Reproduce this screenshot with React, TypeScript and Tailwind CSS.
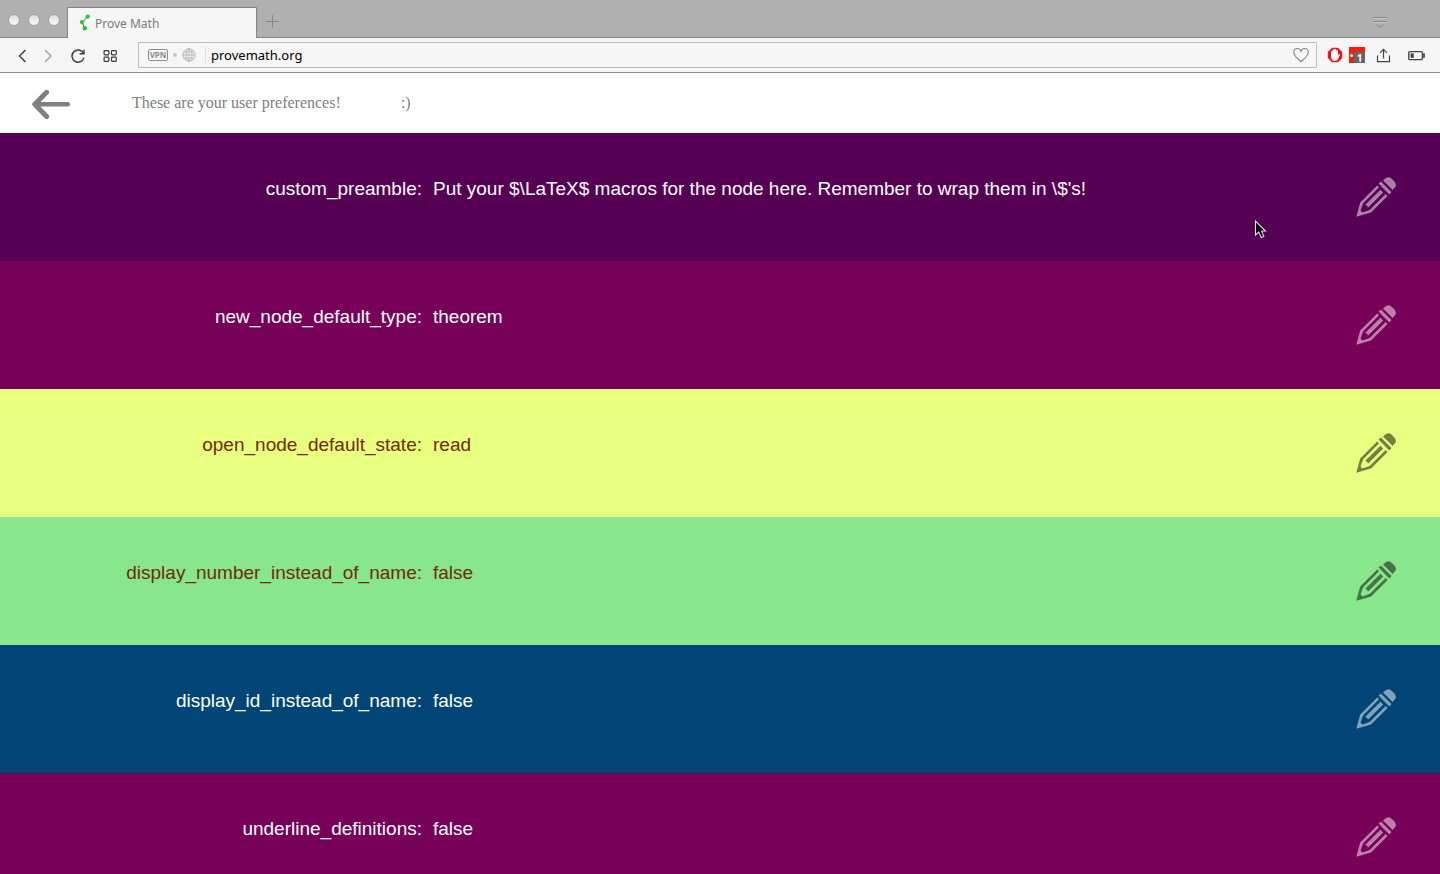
import React from "react";

type Preference = {
  name: string;
  value: string;
  row: string;
  icon: string;
};

const preferences: Preference[] = [
  {
    name: "custom_preamble",
    value: "Put your $\\LaTeX$ macros for the node here. Remember to wrap them in \\$'s!",
    row: "bg-[#550052] text-white",
    icon: "text-white/50",
  },
  { name: "new_node_default_type", value: "theorem", row: "bg-[#770058] text-white", icon: "text-white/50" },
  { name: "open_node_default_state", value: "read", row: "bg-[#e8ff80] text-[#702c08]", icon: "text-black/50" },
  { name: "display_number_instead_of_name", value: "false", row: "bg-[#88e68b] text-[#702c08]", icon: "text-black/50" },
  { name: "display_id_instead_of_name", value: "false", row: "bg-[#004575] text-white", icon: "text-white/50" },
  { name: "underline_definitions", value: "false", row: "bg-[#770058] text-white", icon: "text-white/50" },
];

function Pencil() {
  return (
    <svg viewBox="0 0 40 40" className="size-10" fill="currentColor" aria-hidden="true">
      <path d="M27 3.4 L30 0.9 Q32.6 -0.8 35.4 1.4 L38.4 4.4 Q41 7.6 39.2 10 L36.6 12.9 Z" />
      <path d="M22.5 6.5 L24.9 4.5 L35.5 15.1 L33.3 17.5 Z" />
      <path d="M21.2 8.4 L23.1 10.3 L7.2 26.2 L4.5 33.6 L6.4 35.5 L13.6 33 L29.7 17 L31.6 18.9 L15 35.6 L0.3 39.8 L4.2 25.4 Z" />
      <path d="M9 28 L24.4 12.7 L27.2 15.5 L11.9 30.8 L11.3 28.7 Z" />
    </svg>
  );
}

function BackArrow() {
  return (
    <svg viewBox="0 0 40 32" className="h-8 w-10" fill="none" stroke="#808080" strokeWidth="5" strokeLinecap="round" strokeLinejoin="round" aria-hidden="true">
      <path d="M36.8 16.3 H4" strokeWidth="4.4" />
      <path d="M15.6 4.3 L3.8 16.3 L15.6 28.5" />
    </svg>
  );
}

function TabStrip() {
  return (
    <div className="flex h-[38px] items-stretch border-b border-[#858585] bg-[#b0b0b0]">
      <div className="flex w-[67px] items-center gap-2 pl-2">
        {["Close window", "Minimize window", "Zoom window"].map((label) => (
          <button
            key={label}
            aria-label={label}
            className="mt-[2px] size-3 rounded-full border border-[#a2a2a2] bg-linear-to-b from-[#dcdcdc] to-[#fafafa]"
          />
        ))}
      </div>
      <div className="-mb-px mt-[7px] flex w-[190px] items-center gap-[3px] border border-b-0 border-[#858585] bg-[#f6f6f6] pl-[10px]">
        <svg viewBox="0 0 14 18" className="h-[18px] w-[14px]" aria-hidden="true">
          <path d="M9.5 3 L4 8.5 L7 14.5" fill="none" stroke="#555" strokeWidth="1" />
          <circle cx="9.7" cy="2.6" r="2.2" fill="#2fc52f" />
          <circle cx="4" cy="8.2" r="2.1" fill="#2fc52f" />
          <circle cx="6.8" cy="14.2" r="2.3" fill="#2fc52f" />
        </svg>
        <span className="pt-[2px] text-[12px] text-[#7b7b7b]">Prove Math</span>
      </div>
      <button aria-label="New tab" className="ml-2 mt-1 flex items-center">
        <svg viewBox="0 0 14 14" className="size-[14px]" stroke="#858585" aria-hidden="true">
          <path d="M7.5 1 V14 M1 7.5 H14" />
        </svg>
      </button>
      <button aria-label="Tab menu" className="ml-auto mr-[53px] mt-2 flex items-center">
        <svg viewBox="0 0 14 12" className="h-3 w-[14px]" fill="none" stroke="#858585" aria-hidden="true">
          <path d="M0.5 0.5 H13.5 M0.5 4.5 H13.5 M3.5 7.5 L7 10.8 L10.5 7.5" />
          <path d="M0.5 1.5 H13.5 M0.5 5.5 H13.5" stroke="#c8c8c8" />
        </svg>
      </button>
    </div>
  );
}

function AddressBar() {
  return (
    <div className="flex h-[35px] items-center border-b border-[#8c8c8c] bg-[#f6f6f6]">
      <nav aria-label="Browser" className="flex w-[138px] shrink-0 items-center gap-3 pl-[15px] pt-px">
        <button aria-label="Back">
          <svg viewBox="0 0 14 16" className="h-4 w-[14px]" fill="none" stroke="#333" strokeWidth="1.3">
            <path d="M10.5 2 L4.5 8 L10.5 14" />
          </svg>
        </button>
        <button aria-label="Forward">
          <svg viewBox="0 0 14 16" className="h-4 w-[14px]" fill="none" stroke="#999" strokeWidth="1.3">
            <path d="M4 2 L10 8 L4 14" />
          </svg>
        </button>
        <button aria-label="Reload" className="ml-[3px]">
          <svg viewBox="0 0 16 16" className="size-4" fill="none" stroke="#3a3a3a" strokeWidth="1.4">
            <path d="M13.5 5.2 A6.1 6.1 0 1 0 14 9.6" />
            <path d="M14 1.8 V5.7 H9.6" />
          </svg>
        </button>
        <button aria-label="Speed dial" className="ml-1">
          <svg viewBox="0 0 16 16" className="size-4" fill="none" stroke="#3a3a3a" strokeWidth="1.2">
            <rect x="2.1" y="2.6" width="4.8" height="4.2" rx="0.8" />
            <rect x="9.5" y="2.6" width="4.8" height="4.2" rx="0.8" />
            <rect x="2.1" y="9.2" width="4.8" height="4.2" rx="0.8" />
            <rect x="9.5" y="9.2" width="4.8" height="4.2" rx="0.8" />
          </svg>
        </button>
      </nav>
      <div className="flex h-[26px] min-w-0 flex-1 items-center rounded-[1px] border border-[#bdbdbd] bg-[#f6f6f6] pl-[9px] pr-[7px]">
        <span className="flex h-3 w-5 items-center justify-center rounded-[2px] border border-[#8c8c8c] text-[8px] font-bold leading-none text-[#8c8c8c]">
          VPN
        </span>
        <span className="ml-[5px] size-1 rounded-full bg-[#c6c6c6]" />
        <svg viewBox="0 0 14 14" className="ml-[5px] size-[14px]" fill="none" stroke="#b4b4b4" aria-hidden="true">
          <circle cx="7" cy="7" r="6.2" />
          <ellipse cx="7" cy="7" rx="3" ry="6.2" />
          <path d="M7 1 V13 M1 7 H13 M1.8 4 H12.2 M1.8 10 H12.2" strokeWidth="0.9" />
        </svg>
        <span className="ml-[9px] h-4 w-px bg-[#dcdcdc]" />
        <input
          aria-label="Address"
          defaultValue="provemath.org"
          className="ml-[5px] min-w-0 flex-1 bg-transparent pt-[2px] text-[13px] text-black outline-none"
        />
        <button aria-label="Bookmark">
          <svg viewBox="0 0 16 16" className="size-4" fill="none" stroke="#858585" strokeWidth="1.1">
            <path d="M8 14.6 C5.5 12.3 0.8 9.2 0.8 5.2 C0.8 0.7 6.6 0.3 8 4.1 C9.4 0.3 15.2 0.7 15.2 5.2 C15.2 9.2 10.5 12.3 8 14.6 Z" />
          </svg>
        </button>
      </div>
      <div className="flex shrink-0 items-center pl-[10px] pr-[14px]">
        <button aria-label="Ad blocker">
          <svg viewBox="0 0 16 16" className="size-4">
            <path d="M5 0.8 H11 L15.2 5 V11 L11 15.2 H5 L0.8 11 V5 Z" fill="#f01414" />
            <path d="M4 8.2 V4.6 Q4.7 3.6 5.5 4.4 V2.8 Q6.5 1.9 7.3 2.8 V2.2 Q8.2 1.4 9 2.4 V3.2 Q10.2 2.5 11 3.6 V8 Q12.2 6.6 13 7.6 L10.8 12.6 Q9.8 14 7.8 14 Q4 13.6 4 8.2 Z" fill="#fff" />
          </svg>
        </button>
        <button aria-label="Blocked items: 1" className="ml-[6px] flex size-4 items-end justify-end bg-[#f0200c]">
          <span className="mb-[6px] mr-px size-[3px] rounded-full bg-white" />
          <span className="flex h-[11px] w-[11px] items-center justify-center bg-[#666] text-[10px] font-bold leading-none text-white">1</span>
        </button>
        <button aria-label="Share" className="ml-[10px]">
          <svg viewBox="0 0 18 16" className="h-4 w-[18px]" fill="none" stroke="#444" strokeWidth="1.2">
            <path d="M2.5 8.5 V14.6 H14.5 V8.5 M8.5 11.5 V2.4 M5.1 5.8 L8.5 2.4 L11.9 5.8" />
          </svg>
        </button>
        <button aria-label="Battery saver" className="ml-[15px]">
          <svg viewBox="0 0 18 16" className="h-4 w-[18px]" fill="none" stroke="#444" strokeWidth="1.4">
            <rect x="0.8" y="4.6" width="13.6" height="8" rx="1" />
            <rect x="2.6" y="6.4" width="3.2" height="4.4" fill="#444" stroke="none" />
            <path d="M16 6.4 V10.8" strokeWidth="1.8" />
          </svg>
        </button>
      </div>
    </div>
  );
}

function PreferenceRow({ preference }: { preference: Preference }) {
  return (
    <div className={`flex h-32 shrink-0 items-start pr-11 ${preference.row}`}>
      <dt className="w-[422px] shrink-0 pt-[42px] text-right text-[19px] leading-7">{preference.name}:</dt>
      <dd className="flex min-w-0 flex-1 items-start justify-between pl-[11px]">
        <span className="pt-[42px] text-[19px] leading-7">{preference.value}</span>
        <button aria-label={`Edit ${preference.name}`} className={`mt-11 shrink-0 ${preference.icon}`}>
          <Pencil />
        </button>
      </dd>
    </div>
  );
}

export default function App() {
  return (
    <div className="flex h-screen flex-col overflow-hidden bg-white">
      <header className="shrink-0 font-['Noto_Sans',sans-serif]">
        <TabStrip />
        <AddressBar />
      </header>
      <main className="flex min-h-0 flex-1 flex-col">
        <div className="flex h-[60px] shrink-0 items-center pl-[31px] font-['Liberation_Serif',serif] text-[16px] text-[#808080]">
          <button aria-label="Back to graph" className="mt-[2px]">
            <BackArrow />
          </button>
          <p className="ml-[61px]">These are your user preferences!</p>
          <span className="ml-[60px]">:)</span>
        </div>
        <dl className="min-h-0 flex-1 overflow-hidden font-['Liberation_Sans',sans-serif]">
          {preferences.map((preference) => (
            <PreferenceRow key={preference.name} preference={preference} />
          ))}
        </dl>
      </main>
      <svg viewBox="0 0 14 20" className="pointer-events-none absolute left-[1254px] top-[219px] h-5 w-[14px]" aria-hidden="true">
        <path d="M1.5 2 V16 L4.8 13 L7.2 18.6 L9.8 17.4 L7.6 12 H11.5 Z" fill="#000" stroke="#ddd" strokeWidth="1.1" />
      </svg>
    </div>
  );
}
